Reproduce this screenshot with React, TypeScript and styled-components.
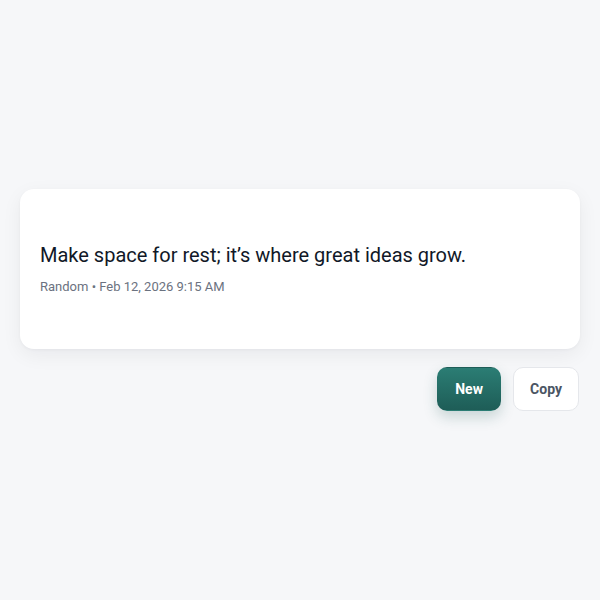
import styled, { createGlobalStyle } from "styled-components";

const GlobalStyle = createGlobalStyle`
    html, body {
        margin: 0;
        padding: 0;
        background: #f6f7f9;
        font-family: Roboto, "Liberation Sans", sans-serif;
    }
`

const App = () => {
    return (
        <>
            <GlobalStyle />
            <Page>
                <Column>
                    <QuoteCard>
                        <QuoteText>Make space for rest; it’s where great ideas grow.</QuoteText>
                        <Meta>Random • Feb 12, 2026 9:15 AM</Meta>
                    </QuoteCard>
                    <Actions>
                        <ActionButton $primary>New</ActionButton>
                        <ActionButton>Copy</ActionButton>
                    </Actions>
                </Column>
            </Page>
        </>
    )
}

export default App;

const Page = styled.div`
    min-height: 600px;
    display: flex;
    align-items: center;
    justify-content: center;
    padding: 0 20px;
    box-sizing: border-box;
`

const Column = styled.div`
    width: 100%;
    display: flex;
    flex-direction: column;
    gap: 18px;
`

const QuoteCard = styled.div`
    background: #ffffff;
    border-radius: 14px;
    min-height: 160px;
    box-sizing: border-box;
    padding: 20px;
    display: flex;
    flex-direction: column;
    justify-content: center;
    gap: 8px;
    box-shadow: 0 6px 20px rgba(17, 24, 39, 0.06), 0 1px 3px rgba(17, 24, 39, 0.04);
`

const QuoteText = styled.p`
    margin: 0;
    font-size: 20px;
    line-height: 28px;
    color: #111827;
`

const Meta = styled.div`
    font-size: 13px;
    line-height: 20px;
    color: #6b7280;
`

const Actions = styled.div`
    display: flex;
    justify-content: flex-end;
    gap: 12px;
    padding-right: 1px;
`

const ActionButton = styled.button<{ $primary?: boolean }>`
    height: 44px;
    min-width: 64px;
    padding: 0 16px;
    border-radius: 10px;
    font-family: Roboto, "Liberation Sans", sans-serif;
    font-size: 14px;
    font-weight: 700;
    cursor: pointer;
    border: 1px solid ${p => p.$primary ? "transparent" : "#e5e7eb"};
    color: ${p => p.$primary ? "#ffffff" : "#4b5563"};
    background: ${p => p.$primary ? "linear-gradient(180deg, #2b7d74 0%, #1e5d57 100%)" : "#ffffff"};
    box-shadow: ${p => p.$primary ? "0 6px 14px rgba(30, 93, 87, 0.22)" : "none"};
`
